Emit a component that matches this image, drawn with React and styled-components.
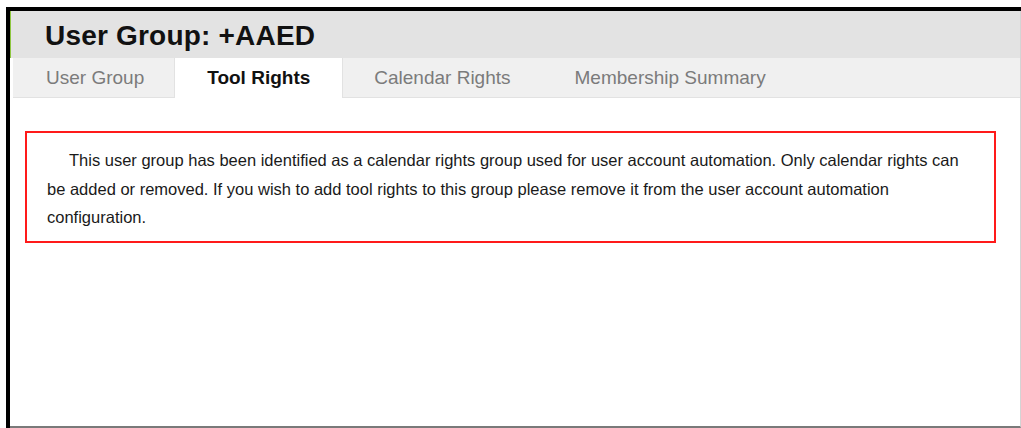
import React from "react";
import styled, { createGlobalStyle } from "styled-components";

const GlobalStyle = createGlobalStyle`
  html, body {
    margin: 0;
    padding: 0;
    background: #ffffff;
    font-family: "Liberation Sans", Arial, sans-serif;
  }
`;

const Frame = styled.div`
  margin: 7px 0 0 6px;
  border-top: 4px solid #000;
  border-left: 4px solid #000;
  height: 421px;
  box-sizing: border-box;
`;

const Panel = styled.div`
  height: 100%;
  box-sizing: border-box;
  border-right: 1px solid #d4d4d4;
  border-bottom: 2px solid #7a7a7a;
  display: flex;
  flex-direction: column;
`;

const Header = styled.div`
  height: 47px;
  box-sizing: border-box;
  background: #e3e3e3;
  border-left: 1px solid #8dc63f;
  display: flex;
  align-items: center;
  padding: 2px 0 0 34px;
`;

const Title = styled.h1`
  margin: 0;
  font-size: 28px;
  font-weight: bold;
  letter-spacing: 0.2px;
  color: #111;
`;

const TabBar = styled.div`
  margin-left: 3px;
  height: 40px;
  box-sizing: border-box;
  background: #f0f0f0;
  border-bottom: 1px solid #e2e2e2;
  display: flex;
  align-items: stretch;
`;

const Tab = styled.div`
  display: flex;
  align-items: center;
  padding: 0 ${(p) => p.$padR}px 0 ${(p) => p.$padL}px;
  font-size: 19px;
  font-weight: ${(p) => (p.$active ? "bold" : "normal")};
  color: ${(p) => (p.$active ? "#111" : "#7b7b7b")};
  background: ${(p) => (p.$active ? "#ffffff" : "transparent")};
  border-left: 1px solid ${(p) => (p.$active ? "#e2e2e2" : "transparent")};
  border-right: 1px solid ${(p) => (p.$active ? "#e2e2e2" : "transparent")};
  margin-bottom: ${(p) => (p.$active ? "-1px" : "0")};
`;

const Content = styled.div`
  padding: 33px 24px 0 15px;
`;

const Notice = styled.div`
  border: 2px solid #ff1a1a;
  padding: 13px 20px 9px 20px;
  font-size: 16.5px;
  line-height: 28.5px;
  color: #1a1a1a;
  text-indent: 22px;
`;

export default function App() {
  const tabs = [
    { label: "User Group", padL: 32, padR: 29 },
    { label: "Tool Rights", padL: 32, padR: 32, active: true },
    { label: "Calendar Rights", padL: 30, padR: 31 },
    { label: "Membership Summary", padL: 31, padR: 30 },
  ];
  return (
    <>
      <GlobalStyle />
      <Frame>
        <Panel>
          <Header>
            <Title>User Group: +AAED</Title>
          </Header>
          <TabBar>
            {tabs.map((t) => (
              <Tab key={t.label} $active={t.active} $padL={t.padL} $padR={t.padR}>
                {t.label}
              </Tab>
            ))}
          </TabBar>
          <Content>
            <Notice>
              This user group has been identified as a calendar rights group used
              for user account automation. Only calendar rights can be added or
              removed. If you wish to add tool rights to this group please remove
              it from the user account automation configuration.
            </Notice>
          </Content>
        </Panel>
      </Frame>
    </>
  );
}
